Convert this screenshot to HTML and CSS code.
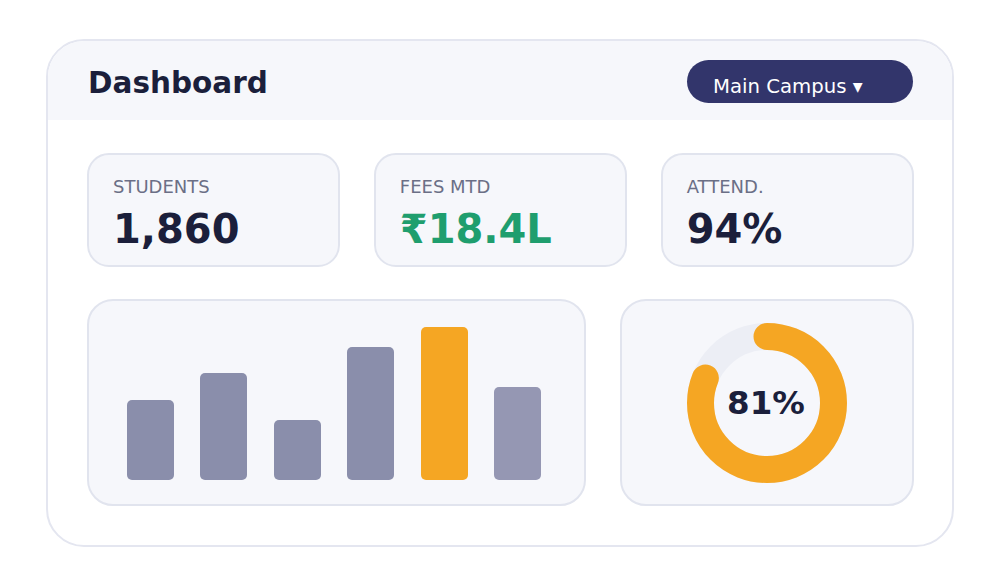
FILE: index.html
```html
<!DOCTYPE html>
<html lang="en">
<head>
  <meta charset="UTF-8">
  <title>Dashboard</title>
  <link rel="stylesheet" href="styles.css">
</head>
<body>

  <div class="card">
    <div class="head">
      <h1>Dashboard</h1>
      <div class="campus">Main Campus ▾</div>
    </div>

    <div class="content">
      <div class="stats">
        <div class="stat">
          <div class="label">STUDENTS</div>
          <div class="value">1,860</div>
        </div>
        <div class="stat">
          <div class="label">FEES MTD</div>
          <div class="value green">₹18.4L</div>
        </div>
        <div class="stat">
          <div class="label">ATTEND.</div>
          <div class="value">94%</div>
        </div>
      </div>

      <div class="lower">
        <div class="panel chart">
          <div class="bar" style="height: 80px;"></div>
          <div class="bar" style="height: 107px;"></div>
          <div class="bar" style="height: 60px;"></div>
          <div class="bar" style="height: 133px;"></div>
          <div class="bar hot" style="height: 153px;"></div>
          <div class="bar soft" style="height: 93px;"></div>
        </div>

        <div class="panel donut">
          <svg width="160" height="160" viewBox="0 0 160 160">
            <circle cx="80" cy="80" r="66.5" fill="none" stroke="#eceef5" stroke-width="27"/>
            <!-- 81% of 2*pi*66.5 = 338.4 of 417.8 -->
            <circle cx="80" cy="80" r="66.5" fill="none" stroke="#f5a623" stroke-width="27"
              stroke-linecap="round" stroke-dasharray="338.4 417.8"
              transform="rotate(-90 80 80)"/>
          </svg>
          <div class="pct">81%</div>
        </div>
      </div>
    </div>
  </div>

</body>
</html>
```

FILE: styles.css
```css
body {
  margin: 0;
  background-color: #ffffff;
  font-family: "DejaVu Sans", Verdana, sans-serif;
  color: #1b1f3b;
}
.card {
  box-sizing: border-box;
  width: 908px;
  height: 508px;
  margin: 39px 0 0 46px;
  border: 2px solid #e4e6f0;
  border-radius: 38px;
  overflow: hidden;
  background-color: #ffffff;
}
.head {
  height: 79px;
  padding: 0 39px 0 40px;
  background-color: #f6f7fb;
  display: flex;
  align-items: center;
  justify-content: space-between;
}
h1 {
  margin: 0;
  font-size: 29.5px;
  font-weight: bold;
  padding-top: 4px;
}
.campus {
  box-sizing: border-box;
  width: 226px;
  height: 43px;
  margin-top: 2px;
  padding: 9px 0 0 26px;
  border-radius: 22px;
  background-color: #32356b;
  color: #ffffff;
  font-size: 19.7px;
  display: flex;
  align-items: center;
}
.content {
  padding: 33px 38px 0 39px;
}
.stats {
  display: grid;
  grid-template-columns: 1fr 1fr 1fr;
  gap: 33.5px;
}
.stat {
  box-sizing: border-box;
  height: 114px;
  padding: 22px 24px 0 24px;
  border: 2px solid #e1e4ee;
  border-radius: 22px;
  background-color: #f6f7fb;
}
.label {
  font-size: 18px;
  line-height: 20px;
  color: #6b6f86;
}
.value {
  margin-top: 10px;
  font-size: 40px;
  line-height: 44px;
  font-weight: bold;
}
.green {
  color: #1f9e6e;
}
.lower {
  display: flex;
  gap: 34px;
  margin-top: 32px;
}
.panel {
  box-sizing: border-box;
  height: 207px;
  border: 2px solid #e1e4ee;
  border-radius: 26px;
  background-color: #f6f7fb;
}
.chart {
  flex: 1;
  padding: 0 0 24px 38px;
  display: flex;
  align-items: flex-end;
  gap: 26.4px;
}
.bar {
  width: 47px;
  border-radius: 5px;
  background-color: #8a8eab;
}
.bar.hot {
  background-color: #f5a623;
}
.bar.soft {
  background-color: #9597b3;
}
.donut {
  width: 294px;
  position: relative;
  display: flex;
  align-items: center;
  justify-content: center;
}
.pct {
  position: absolute;
  font-size: 32.5px;
  font-weight: bold;
  margin-right: 2px;
}
```
